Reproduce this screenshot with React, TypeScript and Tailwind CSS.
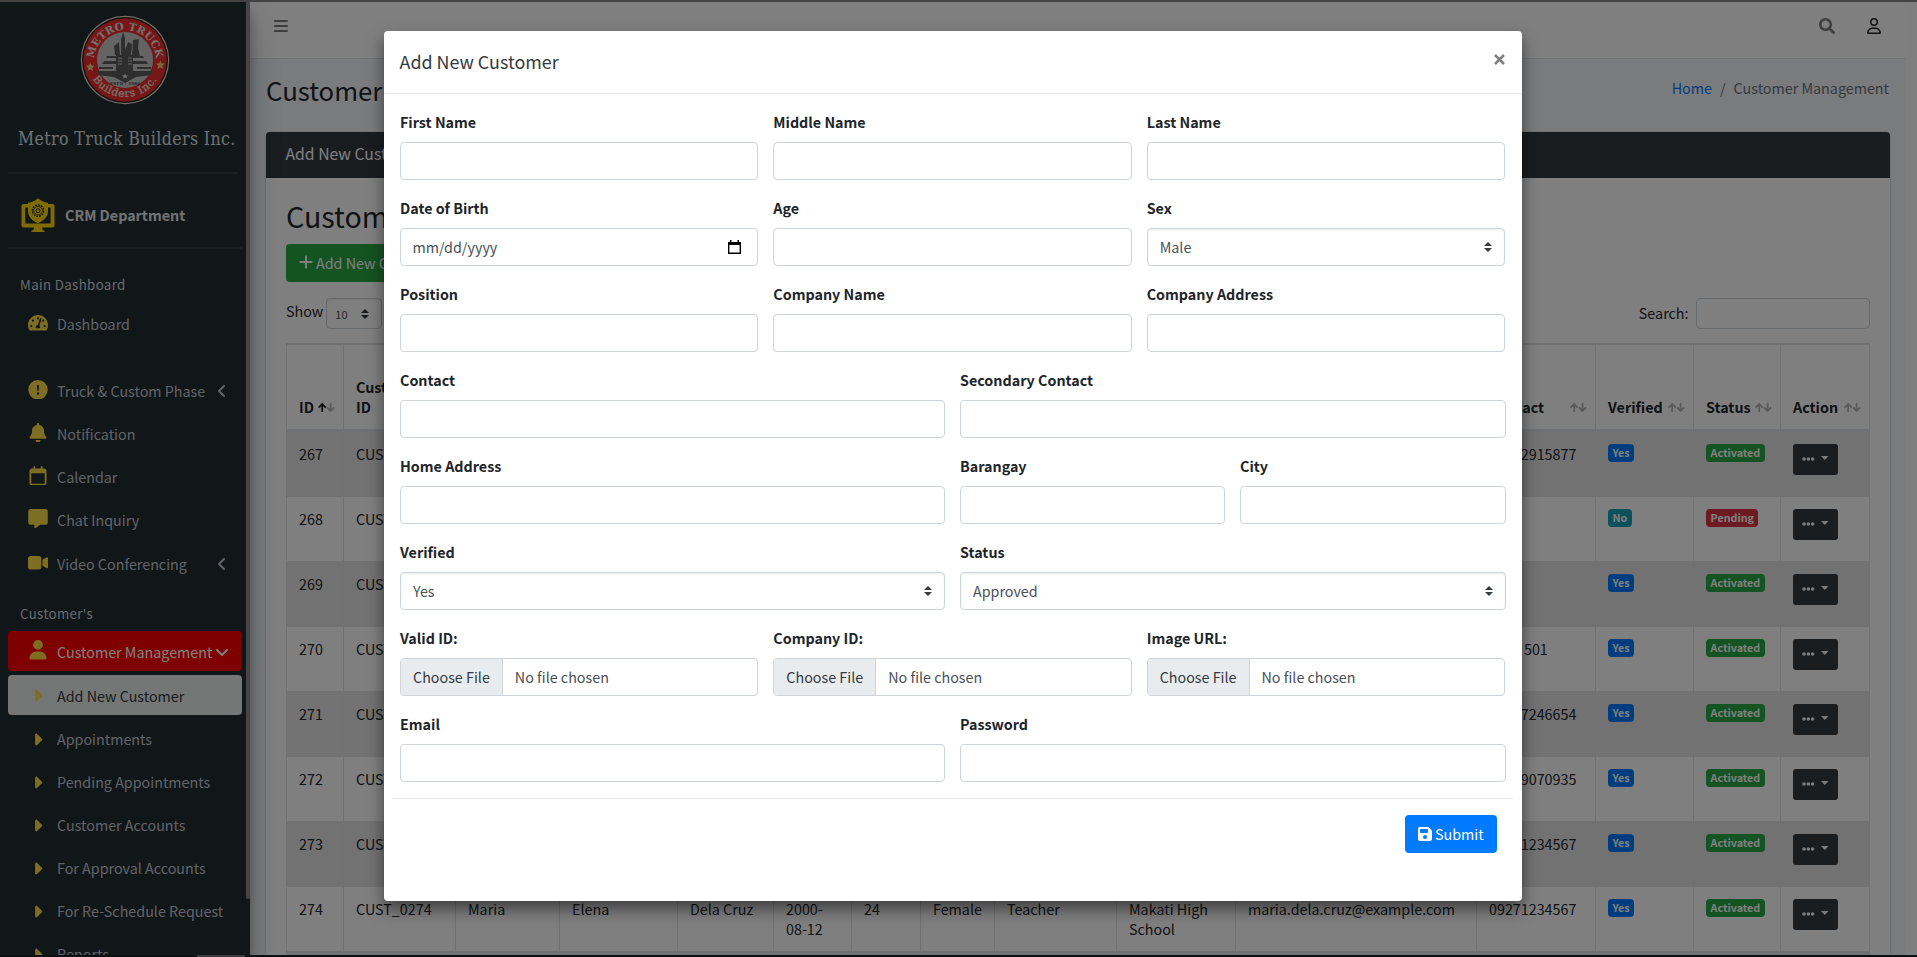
import type { ReactNode } from "react";
import type { IconType } from "react-icons";
import { BsExclamationCircleFill } from "react-icons/bs";
import { FaSearch, FaTachometerAlt } from "react-icons/fa";
import {
  FaAngleDown,
  FaAngleLeft,
  FaBars,
  FaBell,
  FaCaretRight,
  FaFloppyDisk,
  FaMessage,
  FaPlus,
  FaRegCalendar,
  FaRegUser,
  FaUser,
  FaVideo,
} from "react-icons/fa6";

function Logo() {
  return (
    <svg viewBox="0 0 90 90" className="size-[90px]">
      <defs>
        <path id="arc-top" d="M 14 46 A 31 31 0 0 1 76 46" />
        <path id="arc-bottom" d="M 7 44 A 38 38 0 0 0 83 44" />
      </defs>
      <circle cx="45" cy="45" r="44.2" fill="#e9dcc8" />
      <circle cx="45" cy="45" r="43" fill="#1b1b1b" />
      <circle cx="45" cy="45" r="41.8" fill="#ee2c2c" />
      <circle cx="45" cy="45" r="28" fill="#c9c9c9" />
      <text fill="#e8e4e0" fontFamily="DejaVu Serif" fontWeight="bold" fontSize="10.5">
        <textPath href="#arc-top" startOffset="50%" textAnchor="middle">
          METRO TRUCK
        </textPath>
      </text>
      <text fill="#f1e4d6" stroke="#f1e4d6" strokeWidth=".25" fontFamily="DejaVu Serif" fontSize="10.5" letterSpacing=".7">
        <textPath href="#arc-bottom" startOffset="50%" textAnchor="middle">
          Builders Inc.
        </textPath>
      </text>
      <path d="M10.300 47.500l1.200 3.100 3.300.2-2.500 2.100.8 3.200-2.800-1.700-2.800 1.700.8-3.200-2.500-2.100 3.300-.2z" fill="#f2cf84" />
      <path d="M80.300 45.300l1.200 3.100 3.300.2-2.500 2.100.8 3.200-2.800-1.700-2.800 1.700.8-3.200-2.500-2.100 3.300-.2z" fill="#f2cf84" />
      <g fill="#5d5d5d">
        <path d="M41 40V24l2-7 2 6v12l3-8 4 2-1 11zM35 40l-1-9 5-4 1 13zM52 41l1-16 6-1-1 9 2 8z" />
        <path d="M27 41h10v2H26zM24 46h13v3H22zM53 41h10l1 2H53zM53 46h13l2 3H53z" />
        <path d="M36 40h17v16H36z" />
        <path d="M18 56h54v4l-16 2-11 6-11-6-16-2z" />
        <path d="M19 52h14v2H19zM57 52h14v2H57z" />
      </g>
      <path d="M38 43h4M38 46h4M38 49h4M48 43h4M48 46h4M48 49h4" stroke="#c9c9c9" />
      <path d="M45 58.5l.9 1.7 1.9.2-1.4 1.3.4 1.9-1.8-1-1.8 1 .4-1.9-1.4-1.3 1.9-.2z" fill="#e5e5e5" />
      <text x="45" y="70" fontSize="4" fontWeight="bold" textAnchor="middle" fill="#4a4a4a" fontFamily="DejaVu Serif" textLength="30">
        ESTD - 1980
      </text>
    </svg>
  );
}

function CrmIcon() {
  return (
    <svg viewBox="0 0 34 35" className="h-[35px] w-[34px]" fill="#ffd700">
      <path d="M2.5 6H7v3.6H4.2v15.8h25.4V9.6H27V6h4.500a2 2 0 0 1 2 2v19.500a2 2 0 0 1-2 2H21l.6 2.500 2 .8V34H10.400v-1.200l2-.8.6-2.500H2.500a2 2 0 0 1-2-2V8a2 2 0 0 1 2-2z" />
      <path d="M17 .3c3 2.700 6 4 10 4.400v8.600c0 5.400-4 9.400-10 11.900-6-2.500-10-6.500-10-11.900V4.700C11 4.300 14 3 17 .3z" />
      <g fill="none" stroke="#222d32">
        <circle cx="17" cy="12.700" r="5.700" strokeWidth="1.300" strokeDasharray="1.900 1" />
        <circle cx="17" cy="12.700" r="4.300" strokeWidth=".8" />
        <circle cx="17" cy="12.700" r="2" strokeWidth="1" />
      </g>
    </svg>
  );
}

type NavProps = { icon: IconType; label: string; className?: string; trailing?: ReactNode; caret?: boolean };

function NavItem({ icon: Icon, label, className = "mb-[3px] text-[#c2c7d0]", trailing, caret }: NavProps) {
  return (
    <li className={`flex h-10 w-[234px] shrink-0 items-center rounded ${className}`}>
      <span className="ml-[18px] flex w-[23px] justify-center">
        <Icon className={caret ? "h-[19px] w-[19px] text-[#fcdc46]" : "mb-[3px] h-[19.500px] w-[20px] text-[#fcdc46]"} />
      </span>
      <span className="ml-2 whitespace-nowrap">{label}</span>
      {trailing}
    </li>
  );
}

function Sidebar() {
  return (
    <aside className="flex h-full w-[250px] shrink-0 overflow-hidden bg-[#222d32]">
      <div className="flex w-[246px] flex-col pl-2">
        <div className="mt-[13px] flex justify-center pr-1">
          <Logo />
        </div>
        <div className="mt-[19px] h-[31px] pl-[10px] font-['DejaVu_Serif_Condensed','DejaVu_Serif',serif] text-[17.600px] leading-[31px] tracking-[0.370px] whitespace-nowrap text-[#dfe3e6]">
          Metro Truck Builders Inc.
        </div>
        <div className="mt-[17px] w-[230px] border-b-2 border-[#343f45]" />
        <div className="mt-6 flex h-[36px] items-center pl-[13px]">
          <CrmIcon />
          <span className="mb-[2px] ml-[10px] font-bold text-[#e3e6ea]">CRM Department</span>
        </div>
        <div className="mt-[14px] w-[234px] border-b-2 border-[#343f45]" />
        <div className="mt-[24px] h-6 pl-3 text-[13.300px] tracking-[0.350px] text-[#d0d4db]">Main Dashboard</div>
        <ul className="mt-[7px] flex flex-col">
          <NavItem icon={FaTachometerAlt} label="Dashboard" />
          <li className="h-[24px] shrink-0" />
          <NavItem
            icon={BsExclamationCircleFill}
            label="Truck & Custom Phase"
            trailing={<FaAngleLeft className="mb-px ml-[9px] size-4" />}
          />
          <NavItem icon={FaBell} label="Notification" />
          <NavItem icon={FaRegCalendar} label="Calendar" />
          <NavItem icon={FaMessage} label="Chat Inquiry" className="mb-[4px] text-[#c2c7d0]" />
          <NavItem
            icon={FaVideo}
            label="Video Conferencing"
            trailing={<FaAngleLeft className="mb-px ml-[27px] size-4" />}
          />
          <li className="h-[44px] shrink-0 pt-[15px] pl-3 text-[13.300px] tracking-[0.350px] text-[#d0d4db]">Customer's</li>
          <NavItem
            icon={FaUser}
            label="Customer Management"
            className="mb-[4px] bg-[#ff0000] pt-px text-white"
            trailing={<FaAngleDown className="ml-[2px] size-4" />}
          />
          <NavItem icon={FaCaretRight} caret label="Add New Customer" className="mb-[4px] bg-[#e9ecea] pt-px text-[#343a40]" />
          <NavItem icon={FaCaretRight} caret label="Appointments" />
          <NavItem icon={FaCaretRight} caret label="Pending Appointments" />
          <NavItem icon={FaCaretRight} caret label="Customer Accounts" />
          <NavItem icon={FaCaretRight} caret label="For Approval Accounts" />
          <NavItem icon={FaCaretRight} caret label="For Re-Schedule Request" />
          <NavItem icon={FaCaretRight} caret label="Reports" />
        </ul>
      </div>
      <div className="h-[897px] w-1 rounded-b bg-[#8a8a8a]" />
    </aside>
  );
}

function SortArrows({ active }: { active?: boolean }) {
  return (
    <svg viewBox="0 0 17 9" className="mb-[5px] h-[9px] w-[17px] shrink-0" fill="none" strokeWidth="1.800">
      <path d="M.6 4.600L4.200 1l3.600 3.600M4.200 1v8" stroke={active ? "#212529" : "#b4b4b4"} />
      <path d="M9 4.400L12.600 8l3.600-3.600M12.600 8V0" stroke="#b4b4b4" />
    </svg>
  );
}

function Carets({ className }: { className: string }) {
  return (
    <svg viewBox="0 0 8 10" className={className} fill="#343a40">
      <path d="M4 0l4 4H0zM4 10l4-4H0z" />
    </svg>
  );
}

const columns = [
  { label: "ID", width: "w-[57px]" },
  { label: "Customer ID", width: "w-[112px]" },
  { label: "First Name", width: "w-[104px]" },
  { label: "Middle Name", width: "w-[118px]" },
  { label: "Last Name", width: "w-[96px]" },
  { label: "Birth", width: "w-[78px]" },
  { label: "Age", width: "w-[69px]" },
  { label: "Sex", width: "w-[74px]" },
  { label: "Position", width: "w-[122px]" },
  { label: "Company", width: "w-[119px]" },
  { label: "Email", width: "w-[241px]" },
  { label: "Contact", width: "w-[119px]" },
  { label: "Verified", width: "w-[98px]" },
  { label: "Status", width: "w-[87px]" },
  { label: "Action", width: "w-[90px]" },
];

type Customer = { id: string; contact: string; verified: boolean; details?: string[] };

const customers: Customer[] = [
  { id: "267", contact: "09612915877", verified: true },
  { id: "268", contact: "", verified: false },
  { id: "269", contact: "", verified: true },
  { id: "270", contact: "0950 501", verified: true },
  { id: "271", contact: "09567246654", verified: true },
  { id: "272", contact: "09199070935", verified: true },
  { id: "273", contact: "09271234567", verified: true },
  {
    id: "274",
    contact: "09271234567",
    verified: true,
    details: ["Maria", "Elena", "Dela Cruz", "2000-08-12", "24", "Female", "Teacher", "Makati High School", "maria.dela.cruz@example.com"],
  },
];

const blank = ["", "", "", "", "", "", "", "", ""];
const badge = "flex h-[18px] items-center rounded px-[4.500px] text-[10.740px] leading-none font-bold text-white";

function CustomerRow({ customer, striped }: { customer: Customer; striped: boolean }) {
  const { id, contact, verified, details = blank } = customer;
  const cell = "border-t border-l border-[#dee2e6] pt-3 pl-3 pr-2 align-top";
  return (
    <tr className={striped ? "h-[65px] bg-[#e4e4e4]" : "h-[65px]"}>
      <td className={cell}>{id}</td>
      <td className={cell}>{`CUST_0${id}`}</td>
      {details.map((value, i) => (
        <td key={i} className={cell}>
          {value}
        </td>
      ))}
      <td className={cell}>{contact}</td>
      <td className={cell}>
        <div className="flex">
          <span className={`${badge} ${verified ? "bg-[#007bff]" : "bg-[#17a2b8]"}`}>{verified ? "Yes" : "No"}</span>
        </div>
      </td>
      <td className={cell}>
        <div className="flex">
          <span className={`${badge} ${verified ? "bg-[#28a745]" : "bg-[#dc3545]"}`}>
            {verified ? "Activated" : "Pending"}
          </span>
        </div>
      </td>
      <td className="border-x border-t border-[#dee2e6] pt-3 pl-3 align-top">
        <button className="flex h-[31px] w-[45px] items-center rounded-[3px] bg-[#343a40] pb-[2px] pl-[9px]">
          <svg viewBox="0 0 27 5" className="h-[5px] w-[27px]" fill="#f8f9fa">
            <circle cx="2" cy="3" r="1.800" />
            <circle cx="6.300" cy="3" r="1.800" />
            <circle cx="10.600" cy="3" r="1.800" />
            <path d="M19 0h7.500l-3.750 4z" />
          </svg>
        </button>
      </td>
    </tr>
  );
}

function Page() {
  return (
    <div className="flex h-full min-w-0 grow">
      <div className="flex min-w-0 grow flex-col overflow-hidden bg-[#f4f6f9]">
        <header className="flex h-[57px] shrink-0 items-center border-b border-[#dee2e6] bg-white pr-[23px] pb-2 pl-6 text-[#7c7c7c]">
          <FaBars className="h-4 w-[14px]" />
          <FaSearch className="ml-auto size-4" />
          <FaRegUser className="ml-[31px] size-4 text-[#212529]" />
        </header>
        <div className="flex h-[73px] shrink-0 justify-between pr-4 pl-4">
          <h1 className="pt-[14px] text-[25.780px] leading-[34px]">Customer Management</h1>
          <nav className="flex pt-[17px] text-[#6c757d]">
            <span className="text-[#007bff]">Home</span>
            <span className="px-2">/</span>
            <span>Customer Management</span>
          </nav>
        </div>
        <section className="mr-[15px] ml-4 grow rounded-t bg-white shadow-[0_0_1px_rgba(0,0,0,.125),0_1px_3px_rgba(0,0,0,.2)]">
          <div className="h-[46px] rounded-t bg-[#343a40] pl-[19.500px] text-[15.750px] leading-[43px] text-white">Add New Customer</div>
          <div className="w-[1604px] pt-[19px] pl-5">
            <h2 className="text-[28.640px] leading-[38px]">Customer Management</h2>
            <button className="mt-[9px] flex h-[38px] items-center rounded bg-[#28a745] pr-3 pl-[12px] text-white">
              <FaPlus className="mb-[2px] size-4" />
              <span className="ml-[2px]">Add New Customer</span>
            </button>
            <div className="mt-4 flex h-[31px] justify-between">
              <div className="flex items-start">
                <span className="mt-[1px]">Show</span>
                <span className="ml-[3px] flex h-[31px] w-[56px] items-center justify-between rounded border border-[#ced4da] pr-[12px] pl-[8px] text-[11px] text-[#495057] shadow-[inset_0_1px_2px_rgba(0,0,0,.075)]">
                  10
                  <Carets className="h-[10px] w-2" />
                </span>
              </div>
              <div className="flex items-center">
                <span className="mb-[2px]">Search:</span>
                <span className="ml-[7.500px] h-[31px] w-[174px] rounded border border-[#ced4da]" />
              </div>
            </div>
            <table className="mt-[14px] w-[1584px] table-fixed border-separate border-spacing-0 leading-5">
              <thead>
                <tr className="h-[88px] text-left font-bold">
                  {columns.map((column, i) => (
                    <th
                      key={column.label}
                      className={`${column.width} border-y-2 border-l border-[#dee2e6] pr-2 pb-3 pl-3 align-bottom last:border-r`}
                    >
                      <div className="flex items-end justify-between">
                        <span>{column.label}</span>
                        <SortArrows active={i === 0} />
                      </div>
                    </th>
                  ))}
                </tr>
              </thead>
              <tbody>
                {customers.map((customer, i) => (
                  <CustomerRow key={customer.id} customer={customer} striped={i % 2 === 0} />
                ))}
                <tr className="h-[65px] bg-[#e4e4e4]">
                  {columns.map((column) => (
                    <td key={column.label} className="border-t border-l border-[#dee2e6] last:border-r" />
                  ))}
                </tr>
              </tbody>
            </table>
          </div>
        </section>
      </div>
      <div className="w-3 shrink-0 bg-[#fcfcfc]" />
    </div>
  );
}

type FieldKind = "text" | "date" | "select" | "file";
type Field = { label: string; span: string; kind?: FieldKind; value?: string };

const third = "col-span-4";
const half = "col-span-6";
const halfEnd = "col-span-6 -mr-px";

const fields: Field[] = [
  { label: "First Name", span: third },
  { label: "Middle Name", span: third },
  { label: "Last Name", span: third },
  { label: "Date of Birth", span: third, kind: "date" },
  { label: "Age", span: third },
  { label: "Sex", span: third, kind: "select", value: "Male" },
  { label: "Position", span: third },
  { label: "Company Name", span: third },
  { label: "Company Address", span: third },
  { label: "Contact", span: half },
  { label: "Secondary Contact", span: halfEnd },
  { label: "Home Address", span: half },
  { label: "Barangay", span: "col-span-3" },
  { label: "City", span: "col-span-3 -mr-px" },
  { label: "Verified", span: half, kind: "select", value: "Yes" },
  { label: "Status", span: halfEnd, kind: "select", value: "Approved" },
  { label: "Valid ID:", span: third, kind: "file" },
  { label: "Company ID:", span: third, kind: "file" },
  { label: "Image URL:", span: third, kind: "file" },
  { label: "Email", span: half },
  { label: "Password", span: halfEnd },
];

function Control({ kind = "text", value }: { kind?: FieldKind; value?: string }) {
  const box = "mt-2 flex h-[38px] items-center overflow-hidden rounded border border-[#ced4da] bg-white text-[#495057]";
  if (kind === "file") {
    return (
      <div className={box}>
        <span className="flex h-full items-center border-r border-[#ced4da] bg-[#e9ecef] pr-3 pl-[12px] text-[#343a40]">
          Choose File
        </span>
        <span className="ml-3">No file chosen</span>
      </div>
    );
  }
  if (kind === "date") {
    return (
      <div className={`${box} justify-between pr-4 pl-[11.500px]`}>
        <span>mm/dd/yyyy</span>
        <svg viewBox="0 0 13 14" className="h-[14px] w-[13px]">
          <path d="M0 2h2V0h1.500v2h6V0H11v2h2v12H0zM1.400 5v7.600h10.200V5z" fillRule="evenodd" />
        </svg>
      </div>
    );
  }
  if (kind === "select") {
    return (
      <div className={`${box} justify-between pr-3 pl-3 shadow-[inset_0_1px_2px_rgba(0,0,0,.075)]`}>
        <span>{value}</span>
        <Carets className="h-[10px] w-2" />
      </div>
    );
  }
  return <div className={box} />;
}

function CustomerModal() {
  return (
    <div className="flex h-[870px] w-[1138px] flex-col rounded bg-white shadow-[0_8px_16px_rgba(0,0,0,.5)]">
      <div className="flex h-[63px] justify-between border-b border-[#e9ecef] pr-[17px] pl-[15.500px]">
        <h4 className="pt-[15px] text-[17.900px] leading-[30px] text-[#343a40]">Add New Customer</h4>
        <svg viewBox="0 0 11 11" className="mt-[23px] size-[11px]" stroke="#7f7f7f" strokeWidth="2.600">
          <path d="M1 1l9 9M10 1l-9 9" />
        </svg>
      </div>
      <form className="grid grid-cols-12 gap-x-[15px] gap-y-4 pt-4 pr-[17px] pl-4">
        {fields.map((field) => (
          <div key={field.label} className={field.span}>
            <div className="h-6 font-bold">{field.label}</div>
            <Control kind={field.kind} value={field.value} />
          </div>
        ))}
      </form>
      <div className="mx-2 mt-4 flex justify-end border-t border-[#e9ecef] pt-4 pr-[17px]">
        <button className="flex h-[38px] w-[92px] items-center rounded bg-[#007bff] pl-[12px] text-white">
          <FaFloppyDisk className="size-4" />
          <span className="ml-[2px]">Submit</span>
        </button>
      </div>
    </div>
  );
}

export default function App() {
  return (
    <div className="flex h-[957px] w-[1917px] flex-col overflow-hidden bg-[#0d0f10] font-['Noto_Sans_CJK_SC',sans-serif] text-[14.320px] leading-6 text-[#212529]">
      <div className="h-[2px] shrink-0 bg-[#424242]" />
      <div className="relative h-[953px] shrink-0 overflow-hidden">
        <div className="flex h-full">
          <div className="z-10 h-full shrink-0 shadow-[0_14px_28px_rgba(0,0,0,.25),0_10px_10px_rgba(0,0,0,.22)]">
            <Sidebar />
          </div>
          <Page />
        </div>
        <div className="absolute inset-0 z-20 flex justify-center bg-black/50 pt-[29px] pr-[11px]">
          <CustomerModal />
        </div>
      </div>
      <div className="flex h-[2px] shrink-0 pl-[197px]">
        <div className="h-full w-12 bg-[#3c3c3c]" />
      </div>
    </div>
  );
}
